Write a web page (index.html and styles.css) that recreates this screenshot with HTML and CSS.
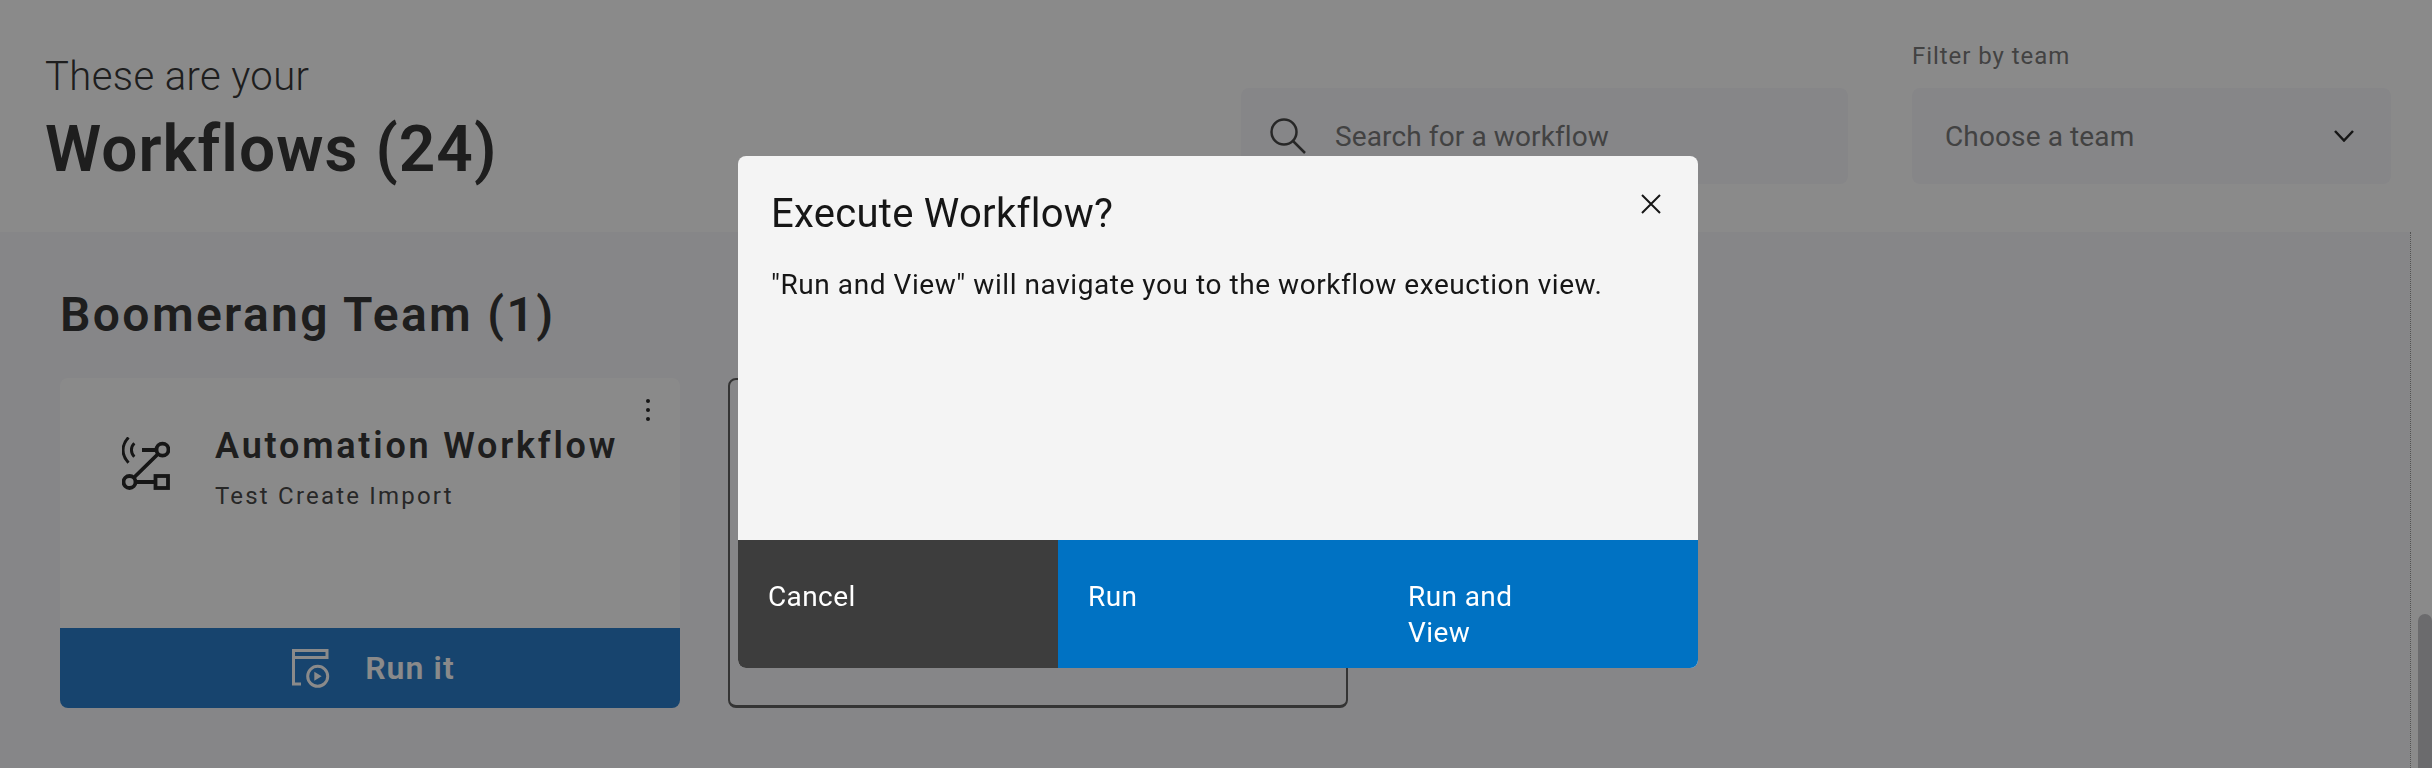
FILE: index.html
```html
<!DOCTYPE html>
<html lang="en">
<head>
<meta charset="utf-8">
<title>Workflows</title>
<link rel="stylesheet" href="styles.css">
</head>
<body>
<div class="page">
  <header class="header">
    <div class="titles">
      <p class="eyebrow">These are your</p>
      <h1 class="title">Workflows (24)</h1>
    </div>
    <div class="search">
      <svg class="search-icon" viewBox="0 0 36 36" aria-hidden="true"><circle cx="14" cy="14" r="12.500"/><path d="M23 23 35 35"/></svg>
      <span class="placeholder">Search for a workflow</span>
    </div>
    <div class="filter">
      <div class="filter-label">Filter by team</div>
      <div class="select">
        <span class="placeholder">Choose a team</span>
        <svg class="chevron" viewBox="0 0 20 12" aria-hidden="true"><path d="M1 1 10 10.500 19 1"/></svg>
      </div>
    </div>
  </header>
  <div class="body">
    <main class="content">
      <h2 class="team">Boomerang Team (1)</h2>
      <div class="cards">
        <article class="card">
          <div class="card-main">
            <svg class="flow-icon" viewBox="0 0 48 53" aria-hidden="true">
              <circle cx="40.500" cy="12.700" r="6"/><circle cx="7.500" cy="45" r="6"/>
              <rect x="33.500" y="39" width="12.500" height="12"/>
              <path d="M13.500 45H33.500M12 40.500 36 17M20 13H34.500"/>
              <path class="thin" d="M6.500 .5C-.8 8 -.8 18 6.500 25.700M12.300 6.300C8.500 10 8.500 16 12.300 19.700"/>
            </svg>
            <div class="card-text">
              <h3 class="card-title">Automation Workflow</h3>
              <p class="card-sub">Test Create Import</p>
            </div>
            <svg class="kebab" viewBox="0 0 4 22" aria-hidden="true"><circle cx="2" cy="2" r="2"/><circle cx="2" cy="11" r="2"/><circle cx="2" cy="20" r="2"/></svg>
          </div>
          <div class="run-bar">
            <svg class="run-icon" viewBox="0 0 38 39" aria-hidden="true">
              <path d="M9 35H1.500V1.500H35V8.500H1.500"/>
              <circle cx="25.700" cy="27.300" r="10"/>
              <path class="solid" d="M22.300 22.700 29.700 27.200 22.300 31.700Z"/>
            </svg>
            <span class="run-label">Run it</span>
          </div>
        </article>
        <div class="card card-empty"></div>
      </div>
    </main>
    <div class="scrollbar"><div class="thumb"></div></div>
  </div>
</div>
<div class="overlay">
  <section class="modal">
    <div class="modal-body">
      <div class="modal-head">
        <h2 class="modal-title">Execute Workflow?</h2>
        <svg class="close" viewBox="0 0 20 20" aria-hidden="true"><path d="M1 1 19 19M19 1 1 19"/></svg>
      </div>
      <p class="modal-text">"Run and View" will navigate you to the workflow exeuction view.</p>
    </div>
    <div class="modal-footer">
      <div class="btn btn-cancel">Cancel</div>
      <div class="btn btn-primary">Run</div>
      <div class="btn btn-primary">Run and<br>View</div>
    </div>
  </section>
</div>
</body>
</html>
```
FILE: styles.css
```css
* { box-sizing: border-box; }
html, body { margin: 0; height: 100%; overflow: hidden; }
body { font-family: Roboto, "Noto Sans", sans-serif; color: #262626; background: #f6f6fa; }
h1, h2, h3, p { margin: 0; }

.page { height: 768px; display: flex; flex-direction: column; }

.header { height: 232px; flex: none; background: #fff; display: flex; align-items: flex-end; padding: 0 41px 48px 45px; }
.titles { flex: 1; align-self: flex-start; padding-top: 51px; }
.eyebrow { font-size: 40px; line-height: 52px; font-weight: 300; letter-spacing: .4px; }
.title { font-size: 64px; line-height: 80px; font-weight: 600; margin-top: 7px; letter-spacing: 1.050px; }

.search { width: 607px; height: 96px; margin-right: 64px; background: #f6f6fa; border-radius: 8px; display: flex; align-items: center; padding-left: 29px; }
.search-icon { width: 36px; height: 36px; fill: none; stroke: #393939; stroke-width: 2.500; margin-right: 29px; }
.placeholder { font-size: 28px; letter-spacing: .12px; color: #6f6f6f; }

.filter { width: 479px; }
.filter-label { font-size: 24px; line-height: 32px; letter-spacing: .95px; color: #6f6f6f; margin-bottom: 16px; }
.select { height: 96px; background: #f6f6fa; border-radius: 8px; display: flex; align-items: center; justify-content: space-between; padding: 0 37px 0 33px; }
.chevron { width: 20px; height: 12px; fill: none; stroke: #161616; stroke-width: 2.500; }

.body { flex: 1; display: flex; min-height: 0; }
.content { flex: 1; padding: 53px 0 0 60px; }
.team { font-size: 48px; line-height: 60px; font-weight: 600; letter-spacing: 2.360px; }
.cards { display: flex; gap: 48px; margin-top: 33px; }

.card { width: 620px; height: 330px; border-radius: 8px; display: flex; flex-direction: column; overflow: hidden; background: #fff; }
.card-empty { background: transparent; border: 2px solid #525252; border-bottom-width: 3px; }
.card-main { flex: 1; display: flex; align-items: flex-start; position: relative; padding-left: 62px; }
.flow-icon { width: 48px; height: 53px; margin-top: 59px; flex: none; fill: none; stroke: #161616; stroke-width: 3.800; }
.flow-icon .thin { stroke-width: 3; }
.card-text { margin: 46px 0 0 45px; }
.card-title { font-size: 36px; line-height: 44px; font-weight: 600; letter-spacing: 2.800px; }
.card-sub { font-size: 24px; line-height: 32px; letter-spacing: 2.200px; margin-top: 12px; color: #393939; }
.kebab { position: absolute; top: 21px; right: 30px; width: 4px; height: 22px; fill: #161616; }

.run-bar { height: 80px; flex: none; background: #1872c6; display: flex; align-items: center; justify-content: center; gap: 35px; color: #fff; padding-left: 7px; }
.run-icon { width: 38px; height: 39px; fill: none; stroke: #fff; stroke-width: 3; }
.run-icon .solid { fill: #fff; stroke: none; }
.run-label { font-size: 32px; font-weight: 600; letter-spacing: 1.100px; }

.scrollbar { width: 22px; flex: none; background: #fff; border-left: 1px dotted #909090; padding: 382px 0 0 7px; }
.thumb { height: 154px; background: #c0c0c4; border-radius: 7px 7px 0 0; }

.overlay { position: fixed; inset: 0; background: rgba(22, 22, 22, .5); display: flex; justify-content: center; align-items: flex-start; padding: 156px 0 0 4px; }
.modal { width: 960px; height: 512px; background: #f4f4f4; border-radius: 8px; overflow: hidden; display: flex; flex-direction: column; color: #161616; }
.modal-body { flex: 1; padding: 32px 33px 0; }
.modal-head { display: flex; justify-content: space-between; align-items: flex-start; }
.modal-title { font-size: 40px; line-height: 52px; font-weight: 400; letter-spacing: .28px; }
.close { width: 20px; height: 20px; margin: 6px 4px 0 0; fill: none; stroke: #161616; stroke-width: 2; }
.modal-text { font-size: 28px; line-height: 40px; margin-top: 25px; letter-spacing: .56px; }
.modal-footer { height: 128px; flex: none; display: grid; grid-template-columns: repeat(3, 1fr); }
.btn { font-size: 28px; line-height: 36px; padding: 39px 30px 0; color: #fff; letter-spacing: .4px; }
.btn-cancel { background: #3d3d3d; }
.btn-primary { background: #0072c3; }
```
